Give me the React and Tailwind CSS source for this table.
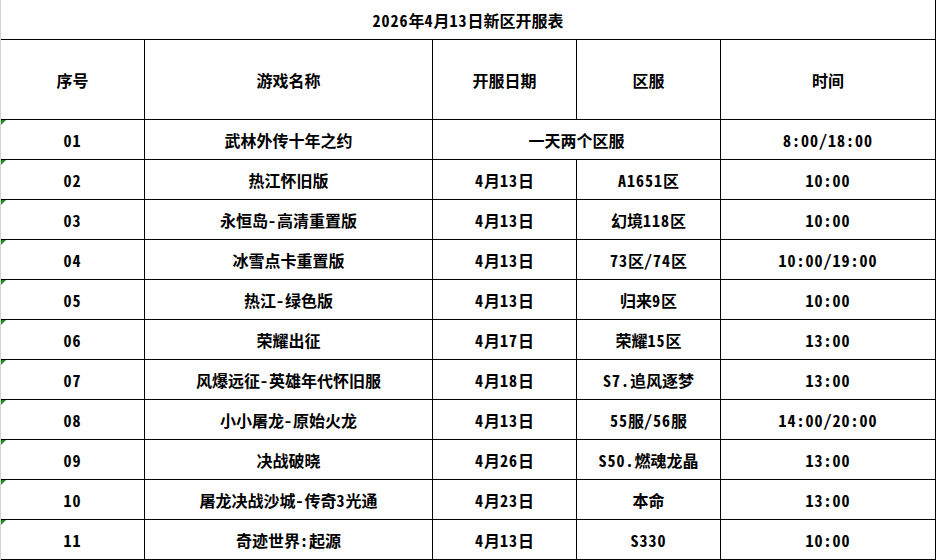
import React from 'react';

const rows = [
  { no: '01', name: '武林外传十年之约', merged: '一天两个区服', time: '8:00/18:00' },
  { no: '02', name: '热江怀旧版', date: '4月13日', server: 'A1651区', time: '10:00' },
  { no: '03', name: '永恒岛-高清重置版', date: '4月13日', server: '幻境118区', time: '10:00' },
  { no: '04', name: '冰雪点卡重置版', date: '4月13日', server: '73区/74区', time: '10:00/19:00' },
  { no: '05', name: '热江-绿色版', date: '4月13日', server: '归来9区', time: '10:00' },
  { no: '06', name: '荣耀出征', date: '4月17日', server: '荣耀15区', time: '13:00' },
  { no: '07', name: '风爆远征-英雄年代怀旧服', date: '4月18日', server: 'S7.追风逐梦', time: '13:00' },
  { no: '08', name: '小小屠龙-原始火龙', date: '4月13日', server: '55服/56服', time: '14:00/20:00' },
  { no: '09', name: '决战破晓', date: '4月26日', server: 'S50.燃魂龙晶', time: '13:00' },
  { no: '10', name: '屠龙决战沙城-传奇3光通', date: '4月23日', server: '本命', time: '13:00' },
  { no: '11', name: '奇迹世界:起源', date: '4月13日', server: 'S330', time: '10:00' },
];

const headers = ['序号', '游戏名称', '开服日期', '区服', '时间'];

// 半角字符单独包起来，宽度接近宋体的等宽数字
const Text = ({ value }) =>
  value.split(/([\x20-\x7e]+)/).filter(Boolean).map((part, i) =>
    /^[\x20-\x7e]+$/.test(part) ? (
      <span key={i} className="tracking-[1px] [font-feature-settings:'hwid']">{part}</span>
    ) : (
      <span key={i}>{part}</span>
    )
  );

// 单元格
const Cell = ({ children, className = '' }) => (
  <div className={`bg-white flex items-center justify-center whitespace-nowrap ${className}`}>
    {children}
  </div>
);

export default function App() {
  return (
    <div
      className="w-[937px] h-[560px] bg-white flex text-black font-bold text-[16px] leading-none overflow-hidden"
      style={{ fontFamily: '"Noto Sans CJK SC", "Noto Sans", sans-serif' }}
    >
      {/* 左侧灰色边 */}
      <div className="w-px h-full bg-[#d4d4d4]" />

      {/* 表格 */}
      <div className="grid grid-cols-[143px_287px_143px_143px_214px] grid-rows-[39px_79px_repeat(11,39px)] gap-px bg-black pr-px pb-px h-[560px]">
        <Cell className="col-span-5"><Text value="2026年4月13日新区开服表" /></Cell>

        {headers.map((h) => (
          <Cell key={h}>{h}</Cell>
        ))}

        {rows.map((r) => (
          <React.Fragment key={r.no}>
            <Cell className="relative">
              {/* 绿色小三角 */}
              <span className="absolute left-0 top-0 w-0 h-0 border-t-[5px] border-r-[5px] border-t-[#1f8a1f] border-r-transparent" />
              <Text value={r.no} />
            </Cell>
            <Cell><Text value={r.name} /></Cell>
            {r.merged ? (
              <Cell className="col-span-2">{r.merged}</Cell>
            ) : (
              <>
                <Cell><Text value={r.date} /></Cell>
                <Cell><Text value={r.server} /></Cell>
              </>
            )}
            <Cell><Text value={r.time} /></Cell>
          </React.Fragment>
        ))}
      </div>
    </div>
  );
}
